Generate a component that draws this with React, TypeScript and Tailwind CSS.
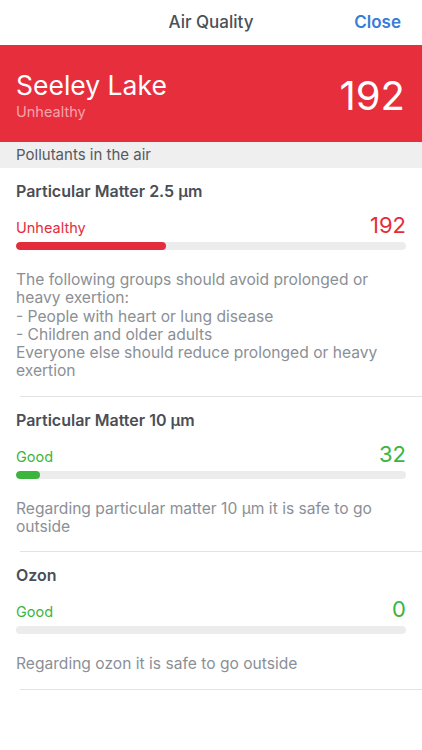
import React from "react";

type Item = {
  title: string;
  label: string;
  value: string;
  color: string;
  pct: number;
  desc: string;
};

const items: Item[] = [
  {
    title: "Particular Matter 2.5 µm",
    label: "Unhealthy",
    value: "192",
    color: "#e42d3c",
    pct: 38.5,
    desc:
      "The following groups should avoid prolonged or heavy exertion:\n- People with heart or lung disease\n- Children and older adults\nEveryone else should reduce prolonged or heavy exertion",
  },
  {
    title: "Particular Matter 10 µm",
    label: "Good",
    value: "32",
    color: "#3cb43e",
    pct: 6.2,
    desc: "Regarding particular matter 10 µm it is safe to go outside",
  },
  {
    title: "Ozon",
    label: "Good",
    value: "0",
    color: "#3cb43e",
    pct: 0,
    desc: "Regarding ozon it is safe to go outside",
  },
];

function Section({ item }: { item: Item }) {
  return (
    <div>
      <div className="px-4 pt-[13px] pb-[15px]">
        <div className="text-[16px] leading-[20px] font-semibold text-[#4a4e56]">{item.title}</div>
        <div className="mt-[11px] flex items-baseline justify-between">
          <span className="text-[14.5px] leading-[18px]" style={{ color: item.color }}>
            {item.label}
          </span>
          <span className="text-[22px] leading-[26px]" style={{ color: item.color }}>
            {item.value}
          </span>
        </div>
        <div className="mt-[4px] h-[8px] w-full rounded-full bg-[#ececec] overflow-hidden">
          <div className="h-full rounded-full" style={{ width: `${item.pct}%`, backgroundColor: item.color }} />
        </div>
        <div className="mt-[21px] pr-[24px] whitespace-pre-line text-[15.6px] leading-[18.3px] text-[#8b8f96]">
          {item.desc}
        </div>
      </div>
      <div className="ml-[20px] h-px bg-[#e3e3e3]" />
    </div>
  );
}

export default function App() {
  return (
    <div
      className="w-[422px] h-[750px] bg-white overflow-hidden"
      style={{ fontFamily: 'Inter, "Liberation Sans", Arial, sans-serif' }}
    >
      <div className="relative h-[45px] flex items-center justify-center">
        <span className="text-[17px] font-medium text-[#4b5058]">Air Quality</span>
        <span className="absolute right-[21px] top-0 h-[45px] flex items-center text-[17px] font-semibold text-[#3a7bd8]">
          Close
        </span>
      </div>
      <div className="h-[97px] bg-[#e72e3d] px-4 pt-[24px] flex justify-between">
        <div className="flex flex-col">
          <span className="text-[26.5px] leading-[32px] text-white">Seeley Lake</span>
          <span className="mt-[2px] text-[14.5px] leading-[18px] text-[#f5a3ab]">Unhealthy</span>
        </div>
        <div className="pt-[3px] text-[40px] leading-[48px] text-white pr-[1px]">192</div>
      </div>
      <div className="h-[26px] bg-[#efefef] px-4 flex items-center text-[15px] text-[#555a61]">
        Pollutants in the air
      </div>
      {items.map((it) => (
        <Section key={it.title} item={it} />
      ))}
    </div>
  );
}
